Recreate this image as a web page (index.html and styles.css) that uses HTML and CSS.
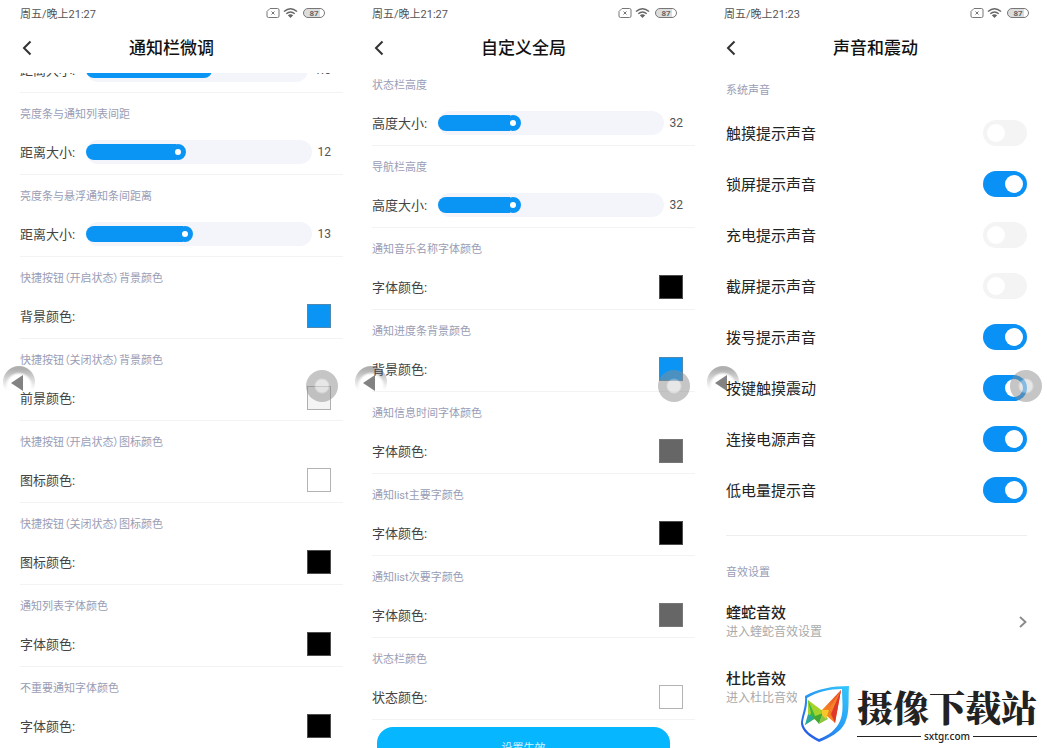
FILE: index.html
```html
<!DOCTYPE html>
<html lang="zh-CN">
<head>
    <meta charset="UTF-8">
    <title>通知栏微调</title>
    <meta name="viewport" content="width=device-width, initial-scale=1.0">
    <link rel="stylesheet" href="styles.css">
</head>
<body>

    <!-- Shared icons -->
    <svg class="sprite" aria-hidden="true">
        <symbol id="icon-status" viewBox="0 0 60 12">
            <g fill="none" stroke="#777" stroke-width="1">
                <path d="M4 1.500H11.500Q13 1.500 13 3V9Q13 10.500 11.500 10.500H2.500Q1 10.500 1 9V4.500Z"/>
                <path d="M5.500 4.500L8.500 7.500M8.500 4.500L5.500 7.500"/>
            </g>
            <g fill="none" stroke="#666" stroke-width="1.500">
                <path d="M18 4.500Q24.500 -1 31 4.500"/>
                <path d="M20.300 6.800Q24.500 3.200 28.700 6.800"/>
            </g>
            <path d="M21.800 8.200Q24.500 6.200 27.200 8.200L24.500 11Z" fill="#666"/>
            <path d="M42 1.500H54V10.500H42Q37.500 9.500 37.500 6T42 1.500Z" fill="#ddd"/>
            <rect x="37.500" y="1.500" width="21" height="9" rx="4.500" fill="none" stroke="#777"/>
            <text x="48" y="9" class="battery-level">87</text>
        </symbol>
        <symbol id="icon-back" viewBox="0 0 16 16">
            <path d="M10.500 1.500L4 8L10.500 14.500" fill="none" stroke="#333" stroke-width="2"/>
        </symbol>
        <symbol id="icon-next" viewBox="0 0 8 14">
            <path d="M1 2L6.500 7L1 12" fill="none" stroke="#888" stroke-width="1.800"/>
        </symbol>
        <symbol id="icon-triangle" viewBox="0 0 32 32">
            <path d="M8 17L20 9V25Z" fill="#828282"/>
        </symbol>
    </svg>

    <main class="screens">

        <section class="phone">
            <header class="top">
                <div class="status"><span>周五/晚上21:27</span><svg class="status-icons"><use href="#icon-status"/></svg></div>
                <div class="title-bar">
                    <button class="back" aria-label="返回"><svg><use href="#icon-back"/></svg></button>
                    <h1>通知栏微调</h1>
                </div>
            </header>
            <button class="ball ball-back" aria-label="返回"><svg><use href="#icon-triangle"/></svg></button>
            <div class="content">
                <div class="scrolled scrolled-far">
                    <div class="setting">
                        <h2>亮度条间距</h2>
                        <div class="row"><label for="gap-1">距离大小:</label><input type="range" id="gap-1" min="0" max="3" step="0.1" value="1.6" style="--fill: 53%"><output for="gap-1">1.6</output></div>
                    </div>
                    <div class="setting">
                        <h2>亮度条与通知列表间距</h2>
                        <div class="row"><label for="gap-2">距离大小:</label><input type="range" id="gap-2" min="0" max="30" value="12" style="--fill: 40%"><output for="gap-2">12</output></div>
                    </div>
                    <div class="setting">
                        <h2>亮度条与悬浮通知条间距离</h2>
                        <div class="row"><label for="gap-3">距离大小:</label><input type="range" id="gap-3" min="0" max="30" value="13" style="--fill: 43%"><output for="gap-3">13</output></div>
                    </div>
                    <div class="setting">
                        <h2>快捷按钮（开启状态）背景颜色</h2>
                        <div class="row"><label for="color-1">背景颜色:</label><input type="color" id="color-1" value="#0a95f5"></div>
                    </div>
                    <div class="setting">
                        <h2>快捷按钮（关闭状态）背景颜色</h2>
                        <div class="row"><label for="color-2">前景颜色:</label><input type="color" id="color-2" value="#f4f4f4"></div>
                    </div>
                    <div class="setting">
                        <h2>快捷按钮（开启状态）图标颜色</h2>
                        <div class="row"><label for="color-3">图标颜色:</label><input type="color" id="color-3" value="#ffffff"></div>
                    </div>
                    <div class="setting">
                        <h2>快捷按钮（关闭状态）图标颜色</h2>
                        <div class="row"><label for="color-4">图标颜色:</label><input type="color" id="color-4" value="#000000"></div>
                    </div>
                    <div class="setting">
                        <h2>通知列表字体颜色</h2>
                        <div class="row"><label for="color-5">字体颜色:</label><input type="color" id="color-5" value="#000000"></div>
                    </div>
                    <div class="setting">
                        <h2>不重要通知字体颜色</h2>
                        <div class="row"><label for="color-6">字体颜色:</label><input type="color" id="color-6" value="#000000"></div>
                    </div>
                </div>
            </div>
            <button class="ball ball-home" aria-label="悬浮球"></button>
        </section>

        <section class="phone">
            <header class="top">
                <div class="status"><span>周五/晚上21:27</span><svg class="status-icons"><use href="#icon-status"/></svg></div>
                <div class="title-bar">
                    <button class="back" aria-label="返回"><svg><use href="#icon-back"/></svg></button>
                    <h1>自定义全局</h1>
                </div>
            </header>
            <button class="ball ball-back" aria-label="返回"><svg><use href="#icon-triangle"/></svg></button>
            <div class="content">
                <div class="scrolled">
                    <div class="setting">
                        <h2>状态栏高度</h2>
                        <div class="row"><label for="height-1">高度大小:</label><input type="range" id="height-1" min="0" max="100" value="32" style="--fill: 32%"><output for="height-1">32</output></div>
                    </div>
                    <div class="setting">
                        <h2>导航栏高度</h2>
                        <div class="row"><label for="height-2">高度大小:</label><input type="range" id="height-2" min="0" max="100" value="32" style="--fill: 32%"><output for="height-2">32</output></div>
                    </div>
                    <div class="setting">
                        <h2>通知音乐名称字体颜色</h2>
                        <div class="row"><label for="global-1">字体颜色:</label><input type="color" id="global-1" value="#000000"></div>
                    </div>
                    <div class="setting">
                        <h2>通知进度条背景颜色</h2>
                        <div class="row"><label for="global-2">背景颜色:</label><input type="color" id="global-2" value="#0a95f5"></div>
                    </div>
                    <div class="setting">
                        <h2>通知信息时间字体颜色</h2>
                        <div class="row"><label for="global-3">字体颜色:</label><input type="color" id="global-3" value="#666666"></div>
                    </div>
                    <div class="setting">
                        <h2>通知list主要字颜色</h2>
                        <div class="row"><label for="global-4">字体颜色:</label><input type="color" id="global-4" value="#000000"></div>
                    </div>
                    <div class="setting">
                        <h2>通知list次要字颜色</h2>
                        <div class="row"><label for="global-5">字体颜色:</label><input type="color" id="global-5" value="#666666"></div>
                    </div>
                    <div class="setting">
                        <h2>状态栏颜色</h2>
                        <div class="row"><label for="global-6">状态颜色:</label><input type="color" id="global-6" value="#ffffff"></div>
                    </div>
                    <button class="apply">设置生效</button>
                </div>
            </div>
            <button class="ball ball-home" aria-label="悬浮球"></button>
        </section>

        <section class="phone">
            <header class="top">
                <div class="status"><span>周五/晚上21:23</span><svg class="status-icons"><use href="#icon-status"/></svg></div>
                <div class="title-bar">
                    <button class="back" aria-label="返回"><svg><use href="#icon-back"/></svg></button>
                    <h1>声音和震动</h1>
                </div>
            </header>
            <button class="ball ball-back" aria-label="返回"><svg><use href="#icon-triangle"/></svg></button>
            <div class="content sounds">
                <h2>系统声音</h2>
                <div class="switches">
                    <label class="switch-row">触摸提示声音<input type="checkbox" class="switch"></label>
                    <label class="switch-row">锁屏提示声音<input type="checkbox" class="switch" checked></label>
                    <label class="switch-row">充电提示声音<input type="checkbox" class="switch"></label>
                    <label class="switch-row">截屏提示声音<input type="checkbox" class="switch"></label>
                    <label class="switch-row">拨号提示声音<input type="checkbox" class="switch" checked></label>
                    <label class="switch-row">按键触摸震动<input type="checkbox" class="switch" checked></label>
                    <label class="switch-row">连接电源声音<input type="checkbox" class="switch" checked></label>
                    <label class="switch-row">低电量提示音<input type="checkbox" class="switch" checked></label>
                </div>
                <hr>
                <h2>音效设置</h2>
                <nav class="effects">
                    <a href="#viper"><span><strong>蝰蛇音效</strong><small>进入蝰蛇音效设置</small></span><svg><use href="#icon-next"/></svg></a>
                    <a href="#dolby"><span><strong>杜比音效</strong><small>进入杜比音效设置</small></span><svg><use href="#icon-next"/></svg></a>
                </nav>
            </div>
            <button class="ball ball-home" aria-label="悬浮球"></button>
        </section>

    </main>

    <a class="brand" href="#sxtgr">
        <svg class="shield" viewBox="0 0 50 58" aria-hidden="true">
            <defs>
                <linearGradient id="rim" x1="1" y1="0" x2="0" y2="1">
                    <stop offset="0" stop-color="#35c8fb"/>
                    <stop offset="0.5" stop-color="#2799f5"/>
                    <stop offset="1" stop-color="#2747e0"/>
                </linearGradient>
                <linearGradient id="wing" x1="1" y1="0" x2="0" y2="1">
                    <stop offset="0" stop-color="#e8402a"/>
                    <stop offset="1" stop-color="#fba31c"/>
                </linearGradient>
            </defs>
            <path fill="url(#rim)" fill-rule="evenodd" d="M49 1C48 16 50 27 45 38C40 48 29 53 19 57C9 52 2 46 1 39C1 31 6 23 5 11C17 4 32 1 49 1ZM42 4C29 4 17 7 7 13C8 23 3 32 3 38C4 45 11 50 19 54C29 50 36 45 40 36C44 27 42 16 42 4Z"/>
            <path fill="#a4d32c" d="M8 15L24 27L17 36L8 30Z"/>
            <path fill="#36b54a" d="M8 15L11 28L5 40L16 33Z"/>
            <path fill="#2ba6a0" d="M8 29L5 40L14 33Z"/>
            <path fill="#43a832" d="M13 32L23 28L19 39Z"/>
            <path fill="#8cc63e" d="M19 39L23 27L28 34Z"/>
            <path fill="url(#wing)" d="M41 5L21 26L35 38Z"/>
            <path fill="#f7c52c" d="M22 25L29 25L26 34L22 30Z"/>
            <path fill="#f5822a" d="M29 24L41 5L34 30Z"/>
            <path fill="#df382b" d="M41 5L35 38L31 29Z"/>
        </svg>
        <span class="brand-text">
            <span class="brand-name">摄像下载站</span>
            <span class="brand-site">sxtgr.com</span>
        </span>
    </a>

</body>
</html>
```
FILE: styles.css
```css
* {
    box-sizing: border-box;
}

body {
    margin: 0;
    font-family: Roboto, "Noto Sans CJK SC", sans-serif;
    background: #fff;
    color: #333;
}

h1, h2 {
    margin: 0;
}

button {
    padding: 0;
    border: none;
    background: none;
    font-family: inherit;
    cursor: pointer;
}

.sprite {
    position: absolute;
    width: 0;
    height: 0;
}

.screens {
    display: grid;
    grid-template-columns: repeat(3, 1fr);
    column-gap: 9px;
    height: 100vh;
    overflow: hidden;
}

.phone {
    position: relative;
    display: flex;
    flex-direction: column;
    min-width: 0;
    min-height: 0;
}

/* Status bar and title */
.status {
    display: flex;
    justify-content: space-between;
    align-items: center;
    height: 26px;
    padding: 0 17px 0 20px;
    font-size: 11px;
    color: #555;
}

.status-icons {
    width: 60px;
    height: 12px;
}

.battery-level {
    font-size: 8px;
    font-weight: bold;
    text-anchor: middle;
    fill: #666;
}

.title-bar {
    display: grid;
    grid-template-columns: 1fr auto 1fr;
    align-items: center;
    height: 47px;
    padding: 0 20px 3px;
}

.title-bar h1 {
    font-size: 17px;
    font-weight: 500;
    line-height: 24px;
    color: #111;
}

.back, .back svg {
    display: block;
    width: 16px;
    height: 16px;
}

.content {
    position: relative;
    flex: 1;
    min-height: 0;
    overflow: hidden;
}

.content h2 {
    font-size: 11px;
    font-weight: normal;
    line-height: 16px;
    color: #9a9db5;
    font-feature-settings: "palt";
}

/* Lists that are already scrolled under the title */
.scrolled {
    margin-top: -9px;
}

.scrolled-far {
    margin-top: -62px;
}

.setting {
    margin-left: 20px;
    padding-top: 14px;
    border-bottom: 1px solid #f3f3f3;
}

.row {
    display: flex;
    align-items: center;
    height: 44px;
    margin-top: 7px;
    padding-right: 12px;
    font-size: 13px;
}

.row label {
    width: 66px;
    padding-bottom: 2px;
    color: #444;
}

.row output {
    margin-left: 6px;
    font-size: 12px;
    color: #555;
}

input[type="range"] {
    -webkit-appearance: none;
    appearance: none;
    flex: 1;
    min-width: 0;
    height: 24px;
    margin: 0;
    border-radius: 12px;
    background: #f4f5fa;
}

input[type="range"]::-webkit-slider-runnable-track {
    height: 16px;
    border-radius: 8px;
    background: linear-gradient(to right, #0a95f5 var(--fill), transparent var(--fill));
}

input[type="range"]::-webkit-slider-thumb {
    -webkit-appearance: none;
    width: 16px;
    height: 16px;
    border-radius: 50%;
    border: 5px solid #0a95f5;
    background: #fff;
}

input[type="color"] {
    -webkit-appearance: none;
    appearance: none;
    width: 24px;
    height: 24px;
    margin-left: auto;
    padding: 0;
    border: none;
    background: none;
}

input[type="color"]::-webkit-color-swatch-wrapper {
    padding: 0;
}

input[type="color"]::-webkit-color-swatch {
    border: 1px solid rgba(128, 128, 128, 0.6);
    border-radius: 0;
}

.apply {
    display: block;
    width: calc(100% - 50px);
    height: 40px;
    margin: 7px auto 0;
    border-radius: 16px;
    background: #06b7ff;
    color: #d5f3ff;
    font-size: 11px;
}

/* Sound screen */
.sounds {
    padding: 10px 20px 0 22px;
}

.switches {
    margin-top: 8px;
}

.switch-row {
    display: flex;
    justify-content: space-between;
    align-items: center;
    height: 51px;
    font-size: 15px;
    color: #222;
}

.switch {
    -webkit-appearance: none;
    appearance: none;
    display: flex;
    align-items: center;
    width: 44px;
    height: 26px;
    margin: 0;
    padding: 0 4px;
    border-radius: 13px;
    background: #f4f4f4;
}

.switch::before {
    content: "";
    width: 18px;
    height: 18px;
    border-radius: 50%;
    background: #fff;
}

.switch:checked {
    justify-content: flex-end;
    background: #0a91f5;
}

.sounds hr {
    height: 1px;
    margin: 20px 0 29px;
    border: none;
    background: #eee;
}

.effects {
    display: grid;
    row-gap: 28px;
    margin-top: 22px;
}

.effects a {
    display: flex;
    justify-content: space-between;
    align-items: center;
    color: #222;
    text-decoration: none;
}

.effects strong, .effects small {
    display: block;
}

.effects strong {
    font-size: 15px;
    font-weight: 500;
    line-height: 20px;
}

.effects small {
    font-size: 12px;
    line-height: 18px;
    color: #aaa;
}

.effects svg {
    width: 8px;
    height: 14px;
}

/* Floating touch balls */
.ball {
    position: absolute;
    top: 366px;
    width: 32px;
    height: 32px;
    border-radius: 50%;
}

.ball-back {
    left: 3px;
    background: radial-gradient(circle at 50% 62%, #fff 11px, transparent 14px), linear-gradient(#b0b0b0 10%, #ddd 45%, #fff 75%);
}

.ball-back svg {
    display: block;
    width: 32px;
    height: 32px;
}

.ball-home {
    top: 370px;
    right: 5px;
    background: radial-gradient(circle, rgba(215, 215, 215, 0.6) 6px, rgba(140, 140, 140, 0.5) 8px);
}

/* Site badge over the corner */
.brand {
    position: absolute;
    right: 0;
    bottom: 0;
    display: flex;
    gap: 7px;
    padding: 3px 10px 5px 3px;
    background: #fff;
    color: #222;
    text-decoration: none;
}

.shield {
    width: 50px;
    height: 58px;
}

.brand-text {
    display: flex;
    flex-direction: column;
}

.brand-name {
    font-family: "Noto Serif CJK SC", "Noto Sans CJK SC", serif;
    font-size: 36px;
    font-weight: 900;
    line-height: 44px;
}

.brand-site {
    display: flex;
    align-items: center;
    gap: 3px;
    font-family: "Noto Sans", sans-serif;
    font-size: 10px;
    font-weight: 500;
    line-height: 14px;
}

.brand-site::before, .brand-site::after {
    content: "";
    flex: 1;
    height: 1px;
    background: #222;
}
```
